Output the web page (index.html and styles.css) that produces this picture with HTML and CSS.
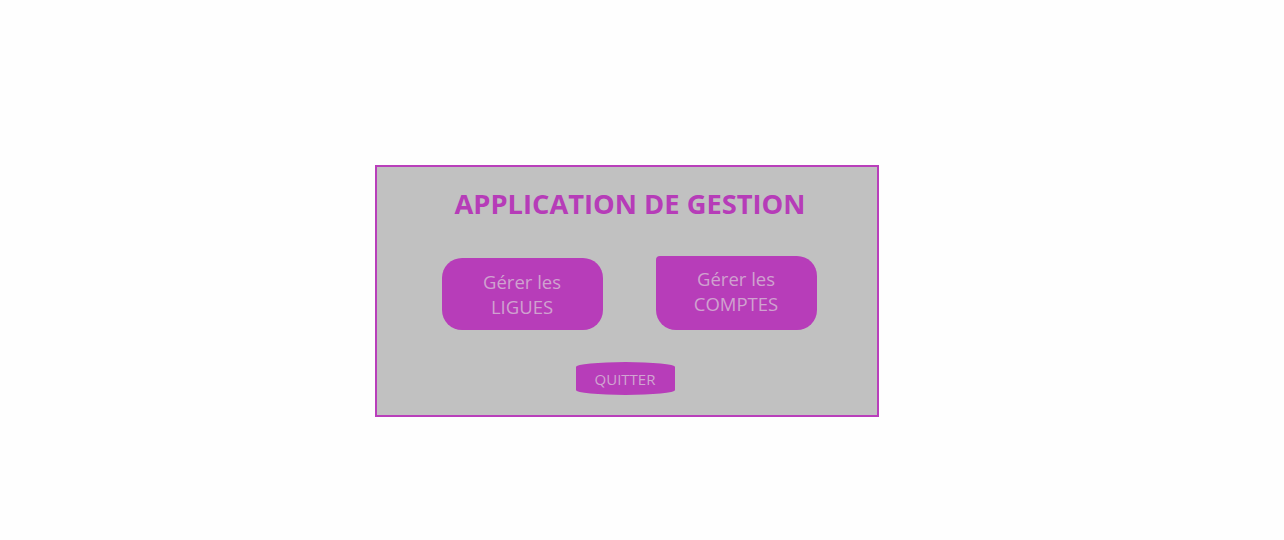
FILE: index.html
```html
<!DOCTYPE html>
<html lang="fr">
<head>
<meta charset="utf-8">
<title>Application de gestion</title>
<link rel="stylesheet" href="styles.css">
</head>
<body>
<div class="panel">
  <h1 class="title">APPLICATION DE GESTION</h1>
  <div class="actions">
    <button class="btn btn-ligues">Gérer les<br>LIGUES</button>
    <button class="btn btn-comptes">Gérer les<br>COMPTES</button>
  </div>
  <button class="quit">QUITTER</button>
</div>
</body>
</html>
```
FILE: styles.css
```css
html, body {
  margin: 0;
  padding: 0;
  background: #fefefe;
}
body {
  font-family: "Open Sans", "Noto Sans", sans-serif;
  padding: 165px 0 0 375px;
}
.panel {
  box-sizing: border-box;
  width: 504px;
  height: 252px;
  border: 2px solid #b93fbb;
  background: #c1c1c1;
  display: flex;
  flex-direction: column;
  align-items: center;
}
.title {
  margin: 18px 0 0 6px;
  font-size: 27.3px;
  font-weight: 700;
  color: #b63cb8;
  line-height: 38px;
  letter-spacing: 0;
}
.actions {
  display: flex;
  gap: 53px;
  align-items: flex-end;
  margin: 33px 0 0 4px;
}
.btn {
  border: none;
  background: #b73db9;
  color: #cfa2cf;
  font-family: inherit;
  font-size: 18.5px;
  line-height: 25px;
  width: 161px;
  padding: 0;
  cursor: pointer;
}
.btn-ligues {
  height: 72px;
  border-radius: 20px;
}
.btn-comptes {
  height: 74px;
  border-radius: 4px 20px 20px 20px;
  padding-bottom: 4px;
}
.quit {
  margin: 32px 4px 0 0;
  width: 99px;
  height: 33px;
  border: none;
  background: #b73db9;
  color: #d0a5d1;
  font-family: inherit;
  font-size: 15px;
  padding: 0;
  border-radius: 50% / 5px;
  cursor: pointer;
}
```
